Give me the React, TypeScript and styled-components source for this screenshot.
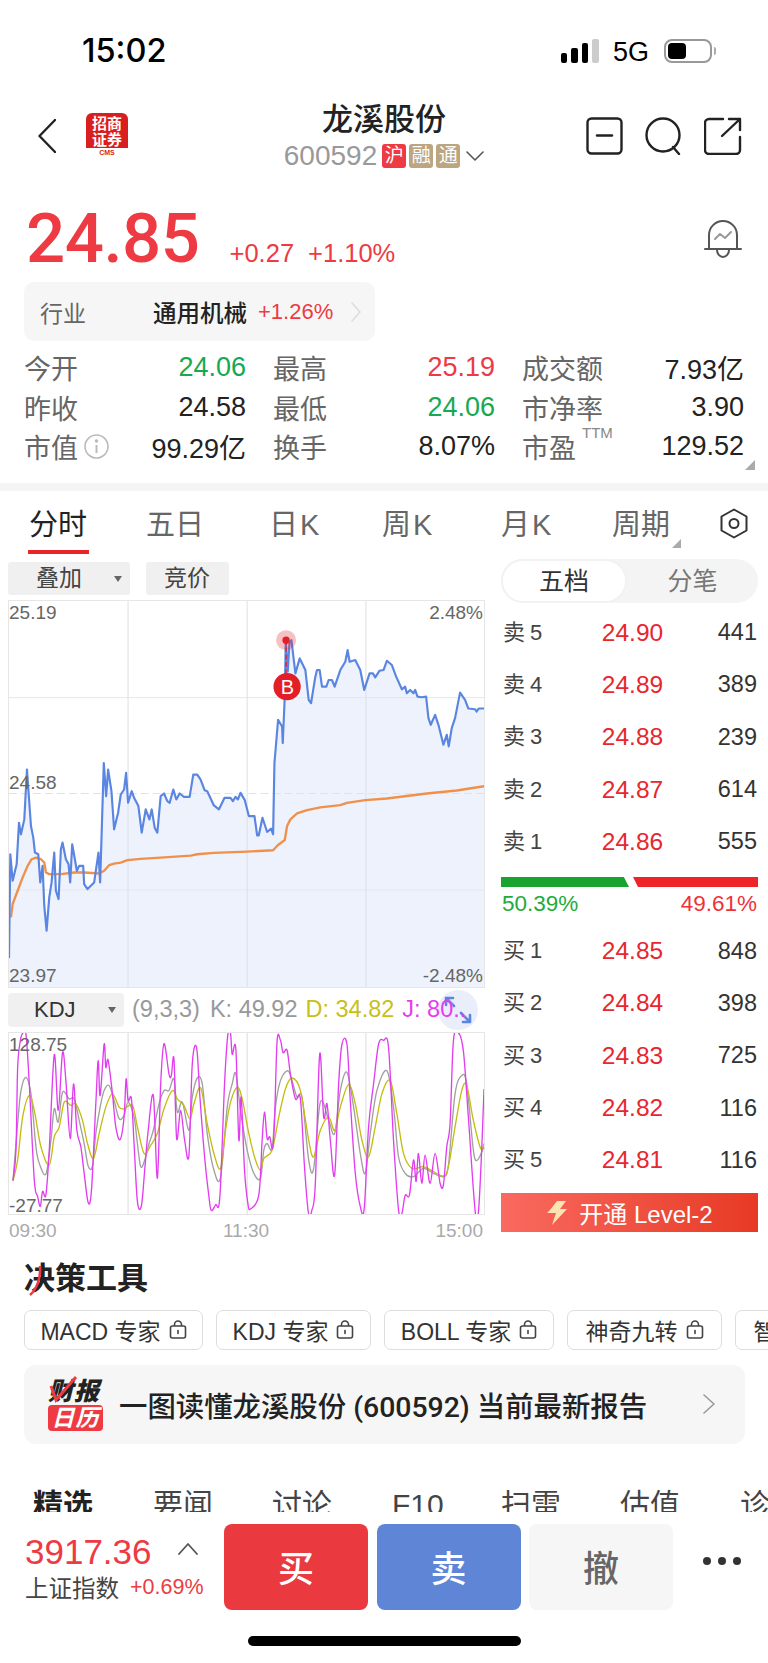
import React from 'react';
import styled, { createGlobalStyle } from 'styled-components';

const RED = '#ee3a43';
const GREEN = '#16a951';
const SANS = `"Liberation Sans", "Noto Sans CJK SC", sans-serif`;

const GlobalStyle = createGlobalStyle`
  html, body { margin: 0; padding: 0; background: #fff; }
  body { font-family: ${SANS}; color: #222; }
  * { box-sizing: border-box; }
`;

const PRICE_LINE =
  '24,1108 28,795 35,875 47,825 54,700 60,735 70,690 78,540 90,710 97,745 102,790 112,795 118,880 125,830 130,950 137,1025 145,925 152,880 160,790 165,905 173,930 180,780 185,760 195,810 203,825 208,880 214,765 222,810 228,845 235,830 247,830 250,885 260,900 270,890 280,880 293,790 298,880 309,520 316,620 322,540 332,605 340,720 352,670 360,615 370,600 376,550 382,640 393,605 400,625 413,650 423,730 435,660 446,690 453,660 462,715 470,730 480,620 490,612 500,635 507,640 518,600 527,630 537,612 550,622 567,622 578,555 590,555 600,570 612,602 620,605 640,648 655,660 672,625 690,625 697,635 705,622 712,630 720,610 733,632 745,680 762,680 770,738 775,738 786,685 800,728 812,718 818,735 822,520 833,390 845,410 847,460 853,320 856,150 862,245 867,160 873,150 885,250 898,205 915,240 925,330 932,340 945,260 950,240 958,240 965,290 978,290 985,270 995,270 1003,290 1020,240 1035,215 1042,180 1048,215 1065,210 1080,240 1092,300 1108,250 1118,250 1125,262 1138,242 1150,240 1160,212 1175,225 1188,260 1205,298 1215,290 1220,310 1230,300 1240,310 1245,300 1252,320 1265,322 1278,320 1285,385 1292,405 1305,375 1315,405 1330,465 1340,435 1346,470 1355,415 1365,385 1380,308 1395,330 1405,356 1425,358 1430,365 1436,356 1452,356';
const AVG_LINE =
  '30,985 35,945 50,905 65,865 80,830 92,810 105,805 120,810 130,820 135,850 145,855 180,855 220,850 250,850 295,853 310,845 325,828 340,823 360,820 380,813 420,809 480,805 570,799 590,795 640,791 740,787 818,783 832,768 853,752 860,710 870,690 890,672 920,662 960,654 1020,647 1040,640 1095,632 1160,627 1280,612 1370,603 1452,590';
const J_LINE =
  '36,592 45,500 50,250 58,170 65,147 75,150 85,300 100,590 110,640 118,670 125,625 135,635 145,500 160,212 172,380 185,205 195,290 208,465 218,300 228,440 240,490 250,570 262,658 272,620 285,360 292,230 298,335 310,180 315,250 322,228 335,330 345,430 358,468 370,400 376,285 382,350 392,345 400,480 410,655 422,668 432,560 442,445 458,335 470,585 480,300 490,178 505,270 512,275 520,225 528,465 540,380 552,470 565,515 575,240 588,190 598,340 612,520 625,640 632,682 645,665 658,640 672,300 682,150 690,147 695,210 706,195 715,470 722,340 732,560 742,660 750,678 775,635 785,470 792,385 800,465 808,460 816,495 822,420 830,170 840,168 848,205 860,198 870,270 885,345 900,345 912,545 924,688 935,680 945,600 958,210 970,400 980,360 990,470 1003,575 1015,300 1025,180 1040,180 1050,350 1065,570 1080,670 1092,675 1105,430 1120,300 1135,180 1150,168 1165,190 1180,470 1195,680 1205,692 1215,637 1228,635 1240,530 1248,595 1255,510 1265,600 1275,515 1290,600 1305,510 1320,600 1330,605 1340,490 1350,420 1360,170 1375,145 1390,200 1405,400 1425,680 1435,690 1445,500 1452,315';
const K_LINE =
  '36,592 50,420 60,320 75,280 90,330 105,490 115,540 135,572 150,470 160,375 172,415 185,325 205,345 220,345 235,410 250,480 262,548 275,548 285,450 298,370 310,320 325,305 340,350 355,405 370,395 382,355 400,400 410,480 420,550 432,530 445,480 458,440 475,360 490,320 505,320 520,285 530,385 545,355 565,440 575,340 590,282 605,300 620,450 640,560 660,582 680,370 695,300 706,270 722,395 740,500 760,570 780,585 790,500 800,480 815,495 825,370 840,290 862,260 875,290 890,340 905,340 925,530 940,555 960,355 985,410 1003,450 1020,320 1040,265 1060,370 1080,510 1095,570 1110,450 1130,320 1160,260 1180,370 1195,520 1215,570 1240,580 1270,555 1300,570 1330,580 1345,545 1365,330 1385,275 1400,300 1420,500 1432,530 1452,490';
const D_LINE =
  '36,592 50,530 65,400 85,335 100,380 120,490 145,545 160,460 175,430 190,355 210,365 225,360 245,410 260,480 278,525 295,450 315,370 335,330 355,370 370,375 395,365 410,430 430,510 450,485 470,450 490,375 515,320 530,345 550,365 568,405 580,360 600,312 620,420 640,510 660,555 675,440 690,355 710,310 725,345 745,450 765,530 780,560 790,525 815,500 835,400 855,315 875,282 900,320 925,470 940,520 960,440 985,400 1003,440 1020,370 1045,302 1065,360 1085,470 1105,520 1125,430 1145,330 1170,290 1190,390 1210,510 1235,555 1270,550 1300,565 1330,578 1345,550 1365,430 1385,320 1400,305 1420,410 1442,495 1452,480';

// catmull-rom through the traced points, the oscillator lines are curves in the app
const smoothPath = (line: string) => {
  const pts = line.split(' ').map((p) => p.split(',').map(Number));
  let d = `M${pts[0][0]} ${pts[0][1]}`;
  for (let i = 0; i < pts.length - 1; i++) {
    const a = pts[Math.max(i - 1, 0)];
    const b = pts[i];
    const c = pts[i + 1];
    const e = pts[Math.min(i + 2, pts.length - 1)];
    d += ` C${b[0] + (c[0] - a[0]) / 6} ${b[1] + (c[1] - a[1]) / 6} ${c[0] - (e[0] - b[0]) / 6} ${c[1] - (e[1] - b[1]) / 6} ${c[0]} ${c[1]}`;
  }
  return d;
};

const Page = styled.div`
  position: relative;
  width: 768px;
  height: 1663px;
  overflow: hidden;
  background: #fff;
`;

/* status bar */
const StatusBar = styled.div`
  height: 100px;
  padding: 39px 52px 0 82px;
  display: flex;
  justify-content: space-between;
  align-items: flex-start;
`;
const Clock = styled.div`
  font-family: Inter, ${SANS};
  font-size: 32.5px;
  font-weight: 500;
  line-height: 24px;
  color: #000;
`;
const StatusRight = styled.div`
  display: flex;
  align-items: center;
  height: 24px;
`;
const Signal = styled.div`
  display: flex;
  align-items: flex-end;
  gap: 4px;
  height: 24px;
`;
const SignalBar = styled.span<{ $h: number; $off?: boolean }>`
  width: 6.5px;
  height: ${(p) => p.$h}px;
  border-radius: 2px;
  background: ${(p) => (p.$off ? '#ccc' : '#000')};
`;
const Net = styled.span`
  margin-left: 14px;
  margin-top: 2px;
  font-size: 27px;
  line-height: 24px;
  color: #000;
`;
const Battery = styled.div`
  margin-left: 15px;
  width: 48px;
  height: 24px;
  border: 2px solid #999;
  border-radius: 8px;
  padding: 2px;
`;
const BatteryFill = styled.div`
  width: 18px;
  height: 100%;
  background: #000;
  border-radius: 4px;
`;
const BatteryNub = styled.div`
  width: 2px;
  height: 8px;
  margin-left: 2px;
  background: #aaa;
  border-radius: 0 2px 2px 0;
`;

/* nav */
const Nav = styled.div`
  height: 70px;
  display: grid;
  grid-template-columns: 1fr auto 1fr;
`;
const NavLeft = styled.div`
  padding: 12px 0 0 38px;
  display: flex;
  align-items: flex-start;
`;
const BackIcon = styled.svg`
  margin-top: 7px;
`;
const BrandLogo = styled.div`
  width: 42px;
  height: 44px;
  margin-left: 30px;
  margin-top: 1px;
  border-radius: 6px;
  overflow: hidden;
  background: #fff;
  display: flex;
  flex-direction: column;
`;
const BrandRed = styled.div`
  height: 35px;
  background: #d81e1e;
  color: #fff;
  font-family: "Noto Sans CJK SC", sans-serif;
  font-size: 15px;
  font-weight: 700;
  line-height: 15.5px;
  text-align: center;
  padding-top: 2px;
`;
const BrandCms = styled.div`
  font-size: 7px;
  font-weight: 700;
  color: #d81e1e;
  text-align: center;
  line-height: 9px;
`;
const NavCenter = styled.div`
  padding-top: 2px;
  display: flex;
  flex-direction: column;
  align-items: center;
`;
const StockName = styled.div`
  font-size: 31px;
  font-weight: 500;
  line-height: 36px;
  color: #222;
`;
const CodeRow = styled.div`
  margin-top: 6px;
  display: flex;
  align-items: center;
  height: 24px;
`;
const Code = styled.span`
  font-size: 28px;
  color: #999;
  margin-right: 5px;
`;
const Badge = styled.span<{ $red?: boolean }>`
  width: 24px;
  height: 24px;
  margin-right: 3px;
  border-radius: 3px;
  background: ${(p) => (p.$red ? '#ee3a43' : '#bca681')};
  color: #fff;
  font-size: 19px;
  line-height: 24px;
  text-align: center;
`;
const DownChevron = styled.svg`
  margin-left: 3px;
`;
const NavIcons = styled.div`
  padding: 17px 26px 0 0;
  display: flex;
  justify-content: flex-end;
  align-items: flex-start;
  gap: 22px;
`;

/* quote */
const QuoteRow = styled.div`
  height: 112px;
  padding: 30px 26px 0 26px;
  display: flex;
  align-items: flex-start;
`;
const BigPrice = styled.div`
  font-family: Roboto, ${SANS};
  font-weight: 500;
  font-size: 69px;
  line-height: 62px;
  letter-spacing: -0.5px;
  color: ${RED};
  margin-top: 8px;
`;
const Change = styled.span`
  font-size: 25.5px;
  color: ${RED};
  line-height: 30px;
  margin-top: 38px;
`;
const ChangeFirst = styled(Change)`
  margin-left: 30px;
`;
const ChangeNext = styled(Change)`
  margin-left: 14px;
`;
const BellWrap = styled.div`
  margin-left: auto;
  margin-top: 19px;
`;

const IndustryBar = styled.div`
  margin: 0 0 0 24px;
  width: 351px;
  height: 59px;
  border-radius: 10px;
  background: #f6f6f6;
  display: flex;
  align-items: center;
  padding: 0 14px 0 16px;
  white-space: nowrap;
`;
const IndustryLabel = styled.span`
  font-size: 23px;
  color: #666;
`;
const IndustryName = styled.span`
  margin-left: 67px;
  font-size: 23.5px;
  font-weight: 500;
  color: #222;
`;
const IndustryPct = styled.span`
  margin-left: 11px;
  font-size: 22px;
  color: ${RED};
`;
const IndustryChevron = styled.span`
  margin-left: 18px;
  display: flex;
`;

/* metrics */
const Metrics = styled.div`
  position: relative;
  margin: 7px 23px 0 24px;
  display: grid;
  grid-template-columns: repeat(3, 222px);
  column-gap: 27px;
  grid-auto-rows: 39.5px;
`;
const Metric = styled.div`
  display: flex;
  justify-content: space-between;
  align-items: center;
  font-size: 27px;
`;
const MetricLabel = styled.span`
  position: relative;
  display: flex;
  align-items: center;
  gap: 6px;
  color: #666;
`;
const MetricValue = styled.span<{ $color?: string }>`
  color: ${(p) => p.$color ?? '#222'};
`;
const Ttm = styled.sup`
  position: absolute;
  left: 60px;
  top: -2px;
  margin: 0;
  font-size: 15px;
  line-height: 16px;
  color: #888;
`;
const Corner = styled.div`
  position: absolute;
  right: -10px;
  bottom: -3px;
  width: 0;
  height: 0;
  border-style: solid;
  border-width: 0 0 10px 10px;
  border-color: transparent transparent #aaa transparent;
`;
const Band = styled.div`
  height: 8px;
  margin-top: 16px;
  background: #f5f5f5;
`;

/* period tabs */
const PeriodTabs = styled.div`
  position: relative;
  height: 63px;
  display: flex;
  align-items: flex-start;
  padding: 17px 20px 0 29px;
`;
const PeriodTab = styled.div<{ $active?: boolean; $w: number }>`
  position: relative;
  width: ${(p) => p.$w}px;
  font-size: 29px;
  line-height: 34px;
  word-spacing: -6px;
  color: ${(p) => (p.$active ? '#222' : '#666')};
  white-space: nowrap;
`;
const Underline = styled.div`
  position: absolute;
  left: -1px;
  top: 42px;
  width: 61px;
  height: 4px;
  background: #e8262a;
`;
const TabTriangle = styled.div`
  position: absolute;
  left: 60px;
  top: 31px;
  width: 0;
  height: 0;
  border-style: solid;
  border-width: 0 0 9px 9px;
  border-color: transparent transparent #aaa transparent;
`;
const HexWrap = styled.div`
  margin-left: auto;
`;

const Board = styled.div`
  margin-top: 8px;
  display: flex;
  align-items: flex-start;
  height: 696px;
`;
const LeftCol = styled.div`
  margin-left: 8px;
  width: 476px;
`;
const Toolbar = styled.div`
  display: flex;
  gap: 16px;
  height: 33px;
`;
const ToolBtn = styled.div<{ $w: number; $pad?: number }>`
  position: relative;
  width: ${(p) => p.$w}px;
  height: 33px;
  background: #f0f0f0;
  border-radius: 3px;
  font-size: 23px;
  line-height: 33px;
  color: #444;
  padding-left: ${(p) => p.$pad ?? 28}px;
`;
const DownTri = styled.span`
  position: absolute;
  right: 8px;
  top: 14px;
  width: 0;
  height: 0;
  border-style: solid;
  border-width: 6px 4.5px 0 4.5px;
  border-color: #666 transparent transparent transparent;
`;
const ChartBox = styled.div<{ $h: number }>`
  position: relative;
  width: 477px;
  height: ${(p) => p.$h}px;
  border: 1px solid #e6e6e6;
  overflow: hidden;
`;
const MainChartBox = styled(ChartBox)`
  margin-top: 5px;
`;
const ChartSvg = styled.svg`
  display: block;
  width: 100%;
  height: 100%;
`;
const AxisLabel = styled.span<{ $left?: boolean; $top: number }>`
  position: absolute;
  top: ${(p) => p.$top}px;
  ${(p) => (p.$left ? 'left: 0;' : 'right: 1px;')}
  font-size: 19px;
  line-height: 22px;
  color: #666;
`;
const KdjRow = styled.div`
  position: relative;
  margin-top: 5px;
  height: 34px;
  display: flex;
  align-items: center;
  font-size: 23.5px;
  white-space: nowrap;
`;
const KdjSelect = styled(ToolBtn)`
  height: 34px;
  line-height: 34px;
  color: #333;
  font-size: 22px;
  border-radius: 4px;
`;
const KdjStat = styled.span<{ $c: string; $ml: number }>`
  position: relative;
  z-index: 1;
  margin-left: ${(p) => p.$ml}px;
  color: ${(p) => p.$c};
`;
const ExpandBtn = styled.div`
  position: absolute;
  left: 430px;
  top: -3px;
  width: 40px;
  height: 40px;
  border-radius: 50%;
  background: #e9eefa;
  display: flex;
  align-items: center;
  justify-content: center;
`;
const KdjBox = styled(ChartBox)`
  margin-top: 5px;
`;
const TimeAxis = styled.div`
  display: flex;
  justify-content: space-between;
  padding: 5px 1px 0;
  font-size: 19px;
  line-height: 22px;
  color: #aaa;
`;

/* order book */
const RightCol = styled.div`
  margin-left: 17px;
  margin-top: -3px;
  width: 257px;
`;
const Toggle = styled.div`
  height: 44px;
  border-radius: 22px;
  background: #f4f4f4;
  display: flex;
  font-size: 25px;
  line-height: 44px;
  text-align: center;
  color: #777;
`;
const ToggleItem = styled.div<{ $on?: boolean }>`
  flex: ${(p) => (p.$on ? '0 0 126px' : '1')};
  border-radius: 22px;
  background: ${(p) => (p.$on ? '#fff' : 'transparent')};
  border: ${(p) => (p.$on ? '2px solid #f2f2f2' : 'none')};
  line-height: ${(p) => (p.$on ? '40px' : '44px')};
  color: ${(p) => (p.$on ? '#333' : '#777')};
`;
const Book = styled.div<{ $mt: number }>`
  margin-top: ${(p) => p.$mt}px;
`;
const BookRow = styled.div`
  height: 52.3px;
  display: grid;
  grid-template-columns: 88px 90px 1fr;
  align-items: center;
`;
const BookLabel = styled.span`
  padding-left: 2px;
  font-size: 22px;
  line-height: 30px;
  color: #444;
  display: flex;
  align-items: center;
  gap: 5px;
`;
const BookPrice = styled.span`
  font-size: 24.5px;
  color: #e8262e;
  text-align: center;
  margin-left: -3px;
`;
const BookQty = styled.span`
  font-size: 23.5px;
  color: #333;
  text-align: right;
  padding-right: 1px;
`;
const RatioBar = styled.div`
  margin-top: 9px;
  height: 10px;
  display: flex;
  justify-content: space-between;
`;
const RatioBuy = styled.div`
  width: 128px;
  background: #1aa32f;
  clip-path: polygon(0 0, 96% 0, 100% 100%, 0 100%);
`;
const RatioSell = styled.div`
  width: 125px;
  background: #ee2428;
  clip-path: polygon(0 0, 100% 0, 100% 100%, 4% 100%);
`;
const RatioText = styled.div`
  margin-top: 4px;
  display: flex;
  justify-content: space-between;
  font-size: 22.5px;
  line-height: 26px;
`;
const RatioValue = styled.span<{ $c: string }>`
  color: ${(p) => p.$c};
  padding: 0 1px;
`;
const LevelBtn = styled.div`
  margin-top: 7px;
  height: 39px;
  background: linear-gradient(90deg, #f96a60, #e73a25);
  color: #fff;
  display: flex;
  align-items: center;
  justify-content: center;
  gap: 12px;
  font-size: 24px;
`;

/* tools */
const ToolsTitle = styled.div`
  position: relative;
  margin: 0 0 0 24px;
  height: 42px;
  width: 126px;
  font-size: 31px;
  font-weight: 700;
  line-height: 42px;
  color: #222;
`;
const TitleSlash = styled.svg`
  position: absolute;
  left: 4px;
  top: 7px;
`;
const ChipRow = styled.div`
  margin-top: 10px;
  padding-left: 24px;
  display: flex;
  gap: 13px;
  overflow: hidden;
`;
const Chip = styled.div<{ $w: number }>`
  flex: 0 0 ${(p) => p.$w}px;
  height: 40px;
  border: 1.5px solid #ddd;
  border-radius: 7px;
  display: flex;
  align-items: center;
  justify-content: center;
  gap: 8px;
  font-size: 23px;
  color: #333;
  white-space: nowrap;
`;
const ReportBanner = styled.div`
  margin: 15px 23px 0 24px;
  height: 79px;
  border-radius: 12px;
  background: #f6f6f6;
  display: flex;
  align-items: center;
  padding: 0 30px 0 24px;
`;
const ReportLogo = styled.div`
  position: relative;
  width: 55px;
  height: 54px;
  flex: none;
`;
const ReportTop = styled.div`
  font-size: 25px;
  font-weight: 900;
  font-style: italic;
  line-height: 28px;
  color: #222;
  letter-spacing: 1px;
`;
const ReportBottom = styled.div`
  height: 26px;
  background: #ee3a43;
  border-radius: 4px;
  color: #fff;
  font-size: 23px;
  font-weight: 700;
  font-style: italic;
  line-height: 26px;
  text-align: center;
  letter-spacing: 1px;
`;
const ReportSlash = styled.svg`
  position: absolute;
  left: 0;
  top: -1px;
`;
const ReportText = styled.div`
  margin-left: 16px;
  font-family: Roboto, ${SANS};
  font-size: 28.4px;
  font-weight: 500;
  color: #222;
  white-space: nowrap;
`;
const ReportChevron = styled.div`
  margin-left: auto;
  display: flex;
`;
const NewsTabs = styled.div`
  margin-top: 44px;
  padding-left: 33px;
  display: flex;
  font-size: 30px;
  line-height: 34px;
  white-space: nowrap;
`;
const NewsTab = styled.div<{ $w: number; $bold?: boolean }>`
  flex: 0 0 ${(p) => p.$w}px;
  font-weight: ${(p) => (p.$bold ? 700 : 400)};
  color: ${(p) => (p.$bold ? '#222' : '#444')};
`;

/* bottom bar */
const BottomBar = styled.div`
  position: absolute;
  left: 0;
  right: 0;
  top: 1512px;
  height: 151px;
  background: #fff;
`;
const BottomMain = styled.div`
  height: 124px;
  padding: 12px 29px 0 25px;
  display: flex;
  align-items: flex-start;
`;
const IndexCol = styled.div`
  width: 199px;
  flex: none;
`;
const IndexTop = styled.div`
  display: flex;
  align-items: center;
  height: 38px;
  margin-top: 9px;
`;
const IndexValue = styled.span`
  font-size: 35px;
  color: ${RED};
`;
const IndexCaret = styled.svg`
  margin-left: 26px;
  margin-top: -6px;
`;
const IndexBottom = styled.div`
  margin-top: -1px;
  display: flex;
  align-items: center;
  gap: 11px;
`;
const IndexName = styled.span`
  font-size: 23.5px;
  color: #444;
`;
const IndexPct = styled.span`
  font-size: 21.5px;
  color: ${RED};
`;
const TradeBtn = styled.div<{ $bg: string; $c: string }>`
  width: 144px;
  height: 86px;
  margin-right: 8.5px;
  padding-bottom: 3px;
  flex: none;
  border-radius: 8px;
  background: ${(p) => p.$bg};
  color: ${(p) => p.$c};
  font-size: 36px;
  font-weight: 500;
  display: flex;
  align-items: center;
  justify-content: center;
`;
const Dots = styled.div`
  margin-left: 21px;
  margin-top: 33px;
  display: flex;
  gap: 7px;
`;
const Dot = styled.span`
  width: 8px;
  height: 8px;
  border-radius: 50%;
  background: #333;
`;
const HomeIndicator = styled.div`
  margin-left: 248px;
  width: 273px;
  height: 10px;
  border-radius: 5px;
  background: #000;
`;

const asks = [
  ['卖', '5', '24.90', '441'],
  ['卖', '4', '24.89', '389'],
  ['卖', '3', '24.88', '239'],
  ['卖', '2', '24.87', '614'],
  ['卖', '1', '24.86', '555'],
];
const bids = [
  ['买', '1', '24.85', '848'],
  ['买', '2', '24.84', '398'],
  ['买', '3', '24.83', '725'],
  ['买', '4', '24.82', '116'],
  ['买', '5', '24.81', '116'],
];

const Chevron = ({ w, h, color, sw = 1.6 }: { w: number; h: number; color: string; sw?: number }) => (
  <svg width={w} height={h} viewBox={`0 0 ${w} ${h}`} fill="none" stroke={color} strokeWidth={sw} strokeLinecap="round" strokeLinejoin="round">
    <path d={`M1 1 L${w - 1} ${h / 2} L1 ${h - 1}`} />
  </svg>
);

const LockIcon = () => (
  <svg width="18" height="19" viewBox="0 0 18 19" fill="none" stroke="#444" strokeWidth="1.6">
    <rect x="1.5" y="6" width="15" height="12" rx="2" />
    <path d="M5.5 6 V4.5 a3.5 3.5 0 0 1 7 0 V6" />
    <path d="M9 10.5 V13.5" strokeLinecap="round" />
  </svg>
);

const BookRows = ({ rows }: { rows: string[][] }) => (
  <>
    {rows.map(([side, n, price, qty]) => (
      <BookRow key={n}>
        <BookLabel>
          {side}
          <span>{n}</span>
        </BookLabel>
        <BookPrice>{price}</BookPrice>
        <BookQty>{qty}</BookQty>
      </BookRow>
    ))}
  </>
);

const App: React.FC = () => {
  return (
    <Page>
      <GlobalStyle />
      <StatusBar>
        <Clock>15:02</Clock>
        <StatusRight>
          <Signal>
            <SignalBar $h={10} />
            <SignalBar $h={15} />
            <SignalBar $h={20} />
            <SignalBar $h={24} $off />
          </Signal>
          <Net>5G</Net>
          <Battery>
            <BatteryFill />
          </Battery>
          <BatteryNub />
        </StatusRight>
      </StatusBar>

      <Nav>
        <NavLeft>
          <BackIcon width="18" height="34" viewBox="0 0 18 34" fill="none" stroke="#222" strokeWidth="2.4" strokeLinecap="round" strokeLinejoin="round">
            <path d="M17 1 L1.5 17 L17 33" />
          </BackIcon>
          <BrandLogo>
            <BrandRed>
              招商
              <br />
              证券
            </BrandRed>
            <BrandCms>CMS</BrandCms>
          </BrandLogo>
        </NavLeft>
        <NavCenter>
          <StockName>龙溪股份</StockName>
          <CodeRow>
            <Code>600592</Code>
            <Badge $red>沪</Badge>
            <Badge>融</Badge>
            <Badge>通</Badge>
            <DownChevron width="18" height="10" viewBox="0 0 18 10" fill="none" stroke="#555" strokeWidth="1.6" strokeLinecap="round" strokeLinejoin="round">
              <path d="M1 1 L9 9 L17 1" />
            </DownChevron>
          </CodeRow>
        </NavCenter>
        <NavIcons>
          <svg width="37" height="38" viewBox="0 0 37 38" fill="none" stroke="#222" strokeWidth="2.4">
            <rect x="1.5" y="1.5" width="34" height="35" rx="4" />
            <path d="M11 18.5 H26" strokeLinecap="round" />
          </svg>
          <svg width="37" height="38" viewBox="0 0 37 38" fill="none" stroke="#222" strokeWidth="2.4">
            <circle cx="18" cy="18" r="16.5" />
            <path d="M28 30 L34 37" strokeLinecap="round" />
          </svg>
          <svg width="38" height="38" viewBox="0 0 38 38" fill="none" stroke="#222" strokeWidth="2.4" strokeLinecap="round" strokeLinejoin="round">
            <path d="M19 2 H5 a4 4 0 0 0 -4 4 V33 a4 4 0 0 0 4 4 H32 a4 4 0 0 0 4 -4 V20" />
            <path d="M18 19 L36 2 M25 2 H36 V13" />
          </svg>
        </NavIcons>
      </Nav>

      <QuoteRow>
        <BigPrice>24.85</BigPrice>
        <ChangeFirst>+0.27</ChangeFirst>
        <ChangeNext>+1.10%</ChangeNext>
        <BellWrap>
          <svg width="38" height="40" viewBox="0 0 38 40" fill="none" stroke="#555" strokeWidth="2" strokeLinecap="round" strokeLinejoin="round">
            <path d="M5 30 V16 a14 14 0 0 1 28 0 V30" />
            <path d="M1 30 H37" />
            <path d="M13 31 a6 7 0 0 0 12 0" />
            <path d="M11 20 L16 15 L21 19 L27 13" stroke="#999" />
          </svg>
        </BellWrap>
      </QuoteRow>

      <IndustryBar>
        <IndustryLabel>行业</IndustryLabel>
        <IndustryName>通用机械</IndustryName>
        <IndustryPct>+1.26%</IndustryPct>
        <IndustryChevron>
          <Chevron w={10} h={20} color="#ddd" />
        </IndustryChevron>
      </IndustryBar>

      <Metrics>
        <Metric>
          <MetricLabel>今开</MetricLabel>
          <MetricValue $color={GREEN}>24.06</MetricValue>
        </Metric>
        <Metric>
          <MetricLabel>最高</MetricLabel>
          <MetricValue $color={RED}>25.19</MetricValue>
        </Metric>
        <Metric>
          <MetricLabel>成交额</MetricLabel>
          <MetricValue>7.93亿</MetricValue>
        </Metric>
        <Metric>
          <MetricLabel>昨收</MetricLabel>
          <MetricValue>24.58</MetricValue>
        </Metric>
        <Metric>
          <MetricLabel>最低</MetricLabel>
          <MetricValue $color={GREEN}>24.06</MetricValue>
        </Metric>
        <Metric>
          <MetricLabel>市净率</MetricLabel>
          <MetricValue>3.90</MetricValue>
        </Metric>
        <Metric>
          <MetricLabel>
            市值
            <svg width="25" height="25" viewBox="0 0 25 25" fill="none" stroke="#bbb" strokeWidth="1.6">
              <circle cx="12.5" cy="12.5" r="11.5" />
              <path d="M12.5 11 V19" strokeWidth="2" />
              <circle cx="12.5" cy="7" r="1" fill="#bbb" />
            </svg>
          </MetricLabel>
          <MetricValue>99.29亿</MetricValue>
        </Metric>
        <Metric>
          <MetricLabel>换手</MetricLabel>
          <MetricValue>8.07%</MetricValue>
        </Metric>
        <Metric>
          <MetricLabel>
            市盈
            <Ttm>TTM</Ttm>
          </MetricLabel>
          <MetricValue>129.52</MetricValue>
        </Metric>
        <Corner />
      </Metrics>
      <Band />

      <PeriodTabs>
        <PeriodTab $w={117} $active>
          分时
          <Underline />
        </PeriodTab>
        <PeriodTab $w={123}>五日</PeriodTab>
        <PeriodTab $w={113}>日 K</PeriodTab>
        <PeriodTab $w={119}>周 K</PeriodTab>
        <PeriodTab $w={111}>月 K</PeriodTab>
        <PeriodTab $w={58}>
          周期
          <TabTriangle />
        </PeriodTab>
        <HexWrap>
          <svg width="28" height="31" viewBox="0 0 28 31" fill="none" stroke="#333" strokeWidth="2" strokeLinejoin="round">
            <path d="M14 1.5 L26.5 8.5 V22.5 L14 29.5 L1.5 22.5 V8.5 Z" />
            <circle cx="14" cy="15.5" r="4.5" />
          </svg>
        </HexWrap>
      </PeriodTabs>

      <Board>
        <LeftCol>
          <Toolbar>
            <ToolBtn $w={122}>
              叠加
              <DownTri />
            </ToolBtn>
            <ToolBtn $w={83} $pad={18}>
              竞价
            </ToolBtn>
          </Toolbar>
          <MainChartBox $h={388}>
            <ChartSvg viewBox="24 32 1428 1163" preserveAspectRatio="none">
              <polygon points={`${PRICE_LINE} 1452,1195 24,1195`} fill="#eef2fc" />
              <path d="M24 323 H1452 M24 903 H1452" stroke="#e6e8ee" strokeWidth="3" />
              <path d="M382 32 V1195 M740 32 V1195 M1097 32 V1195" stroke="#dcdfe6" strokeWidth="3" />
              <path d="M24 612 H1452" stroke="#dfe2ea" strokeWidth="3" strokeDasharray="24 12" />
              <polyline points={AVG_LINE} fill="none" stroke="#f0904a" strokeWidth="7" strokeLinejoin="round" />
              <polyline points={PRICE_LINE} fill="none" stroke="#5a86e2" strokeWidth="6.5" strokeLinejoin="round" />
              <circle cx="857" cy="150" r="30" fill="#e31e26" opacity="0.28" />
              <path d="M857 150 V260" stroke="#e31e26" strokeWidth="4" strokeDasharray="14 8" />
              <circle cx="857" cy="150" r="11" fill="#e31e26" />
              <circle cx="860" cy="290" r="41" fill="#e31e26" />
              <text x="861" y="312" textAnchor="middle" fontSize="60" fill="#fff" fontFamily="Liberation Sans, sans-serif">
                B
              </text>
            </ChartSvg>
            <AxisLabel $left $top={1}>25.19</AxisLabel>
            <AxisLabel $top={1}>2.48%</AxisLabel>
            <AxisLabel $left $top={171}>24.58</AxisLabel>
            <AxisLabel $left $top={364}>23.97</AxisLabel>
            <AxisLabel $top={364}>-2.48%</AxisLabel>
          </MainChartBox>

          <KdjRow>
            <KdjSelect $w={116} $pad={26}>
              KDJ
              <DownTri />
            </KdjSelect>
            <KdjStat $c="#999" $ml={8}>(9,3,3)</KdjStat>
            <KdjStat $c="#999" $ml={10}>K: 49.92</KdjStat>
            <KdjStat $c="#c8c01a" $ml={8}>D: 34.82</KdjStat>
            <KdjStat $c="#e63bf0" $ml={8}>J: 80..</KdjStat>
            <ExpandBtn>
              <svg width="30" height="30" viewBox="0 0 30 30" fill="none" stroke="#5a86e2" strokeWidth="2.6" strokeLinecap="round" strokeLinejoin="round">
                <path d="M3 10 V3 H10 M3 3 L11 11" />
                <path d="M27 20 V27 H20 M27 27 L18 18" />
              </svg>
            </ExpandBtn>
          </KdjRow>

          <KdjBox $h={183}>
            <ChartSvg viewBox="24 146 1428 547" preserveAspectRatio="none">
              <path d="M382 146 V693 M740 146 V693 M1097 146 V693" stroke="#dcdcdc" strokeWidth="3" />
              <path d={smoothPath(K_LINE)} fill="none" stroke="#a0a0a0" strokeWidth="4" strokeLinejoin="round" />
              <path d={smoothPath(D_LINE)} fill="none" stroke="#c6bb12" strokeWidth="4" strokeLinejoin="round" />
              <path d={smoothPath(J_LINE)} fill="none" stroke="#e23cf0" strokeWidth="4" strokeLinejoin="round" />
            </ChartSvg>
            <AxisLabel $left $top={1}>128.75</AxisLabel>
            <AxisLabel $left $top={162}>-27.77</AxisLabel>
          </KdjBox>
          <TimeAxis>
            <span>09:30</span>
            <span>11:30</span>
            <span>15:00</span>
          </TimeAxis>
        </LeftCol>

        <RightCol>
          <Toggle>
            <ToggleItem $on>五档</ToggleItem>
            <ToggleItem>分笔</ToggleItem>
          </Toggle>
          <Book $mt={4}>
            <BookRows rows={asks} />
          </Book>
          <RatioBar>
            <RatioBuy />
            <RatioSell />
          </RatioBar>
          <RatioText>
            <RatioValue $c="#22ab3b">50.39%</RatioValue>
            <RatioValue $c="#ee3338">49.61%</RatioValue>
          </RatioText>
          <Book $mt={8}>
            <BookRows rows={bids} />
          </Book>
          <LevelBtn>
            <svg width="21" height="24" viewBox="0 0 21 24" fill="#fbe3b4">
              <path d="M11 0 H20 L14 8 H21 L6 24 L10 12 H1 L4 9 Z" />
            </svg>
            开通 Level-2
          </LevelBtn>
        </RightCol>
      </Board>

      <ToolsTitle>
        决策工具
        <TitleSlash width="18" height="32" viewBox="0 0 18 32" fill="none" stroke="#ee3a43" strokeWidth="2.5">
          <path d="M12 1 C13 12 9 24 2 30" />
        </TitleSlash>
      </ToolsTitle>
      <ChipRow>
        <Chip $w={179}>
          MACD 专家
          <LockIcon />
        </Chip>
        <Chip $w={155}>
          KDJ 专家
          <LockIcon />
        </Chip>
        <Chip $w={170}>
          BOLL 专家
          <LockIcon />
        </Chip>
        <Chip $w={155}>
          神奇九转
          <LockIcon />
        </Chip>
        <Chip $w={155}>
          智能选股
          <LockIcon />
        </Chip>
      </ChipRow>
      <ReportBanner>
        <ReportLogo>
          <ReportTop>财报</ReportTop>
          <ReportBottom>日历</ReportBottom>
          <ReportSlash width="30" height="30" viewBox="0 0 30 30" fill="none" stroke="#ee3a43" strokeWidth="3">
            <path d="M3 10 L8 24 L28 1" />
          </ReportSlash>
        </ReportLogo>
        <ReportText>一图读懂龙溪股份 (600592) 当前最新报告</ReportText>
        <ReportChevron>
          <Chevron w={12} h={20} color="#999" />
        </ReportChevron>
      </ReportBanner>

      <NewsTabs>
        <NewsTab $w={120} $bold>精选</NewsTab>
        <NewsTab $w={119}>要闻</NewsTab>
        <NewsTab $w={120}>讨论</NewsTab>
        <NewsTab $w={109}>F10</NewsTab>
        <NewsTab $w={119}>扫雷</NewsTab>
        <NewsTab $w={120}>估值</NewsTab>
        <NewsTab $w={60}>诊股</NewsTab>
      </NewsTabs>

      <BottomBar>
        <BottomMain>
          <IndexCol>
            <IndexTop>
              <IndexValue>3917.36</IndexValue>
              <IndexCaret width="20" height="12" viewBox="0 0 20 12" fill="none" stroke="#555" strokeWidth="1.8" strokeLinecap="round" strokeLinejoin="round">
                <path d="M1 11 L10 1 L19 11" />
              </IndexCaret>
            </IndexTop>
            <IndexBottom>
              <IndexName>上证指数</IndexName>
              <IndexPct>+0.69%</IndexPct>
            </IndexBottom>
          </IndexCol>
          <TradeBtn $bg="#ea3a40" $c="#fff">买</TradeBtn>
          <TradeBtn $bg="#5f86d6" $c="#fff">卖</TradeBtn>
          <TradeBtn $bg="#f6f6f6" $c="#666">撤</TradeBtn>
          <Dots>
            <Dot />
            <Dot />
            <Dot />
          </Dots>
        </BottomMain>
        <HomeIndicator />
      </BottomBar>
    </Page>
  );
};

export default App;
